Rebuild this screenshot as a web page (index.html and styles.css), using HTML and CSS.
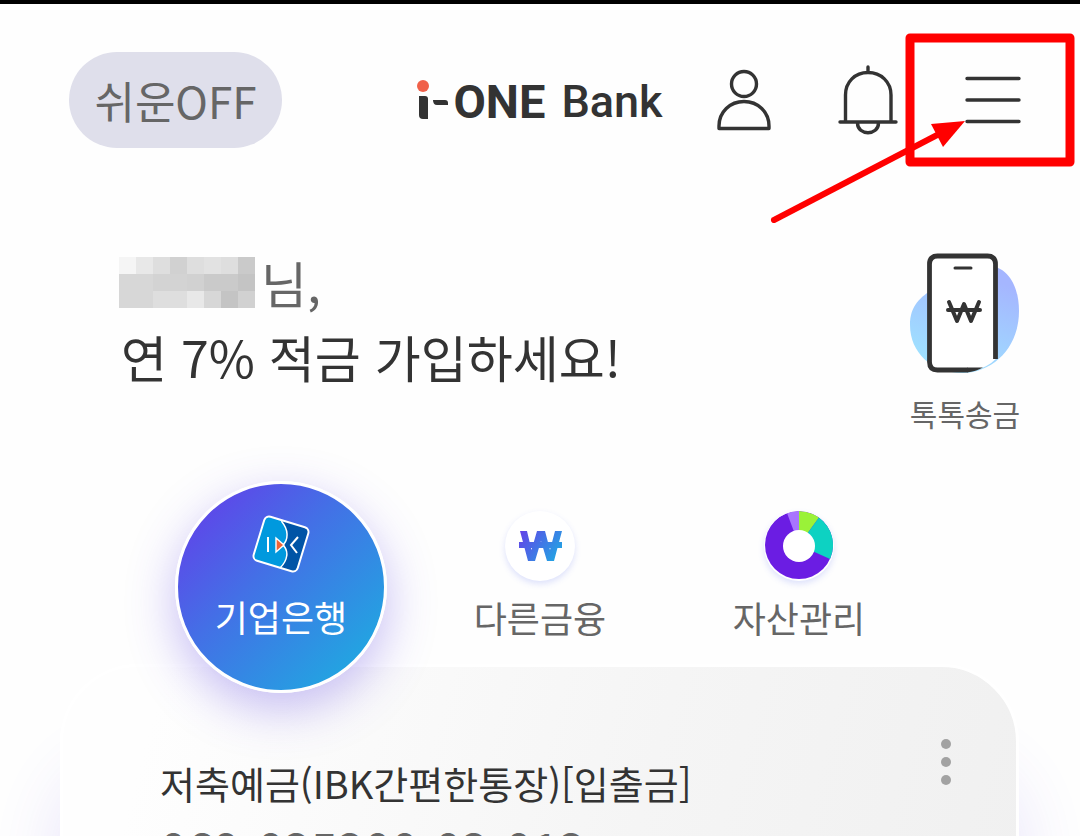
FILE: index.html
```html
<!DOCTYPE html>
<html lang="ko">
<head>
<meta charset="utf-8">
<meta name="viewport" content="width=device-width, initial-scale=1">
<title>i-ONE Bank</title>
<link rel="stylesheet" href="styles.css">
</head>
<body>
<div class="screen">
  <header class="topbar">
    <button class="easy" type="button">쉬운OFF</button>
    <a class="logo" href="#" aria-label="i-ONE Bank">
      <svg class="logo-i" viewBox="0 0 32 42" aria-hidden="true">
        <circle cx="7" cy="7" r="6" fill="#f0614a"/>
        <path d="M3 17h6q3 0 3 3v20H7q-4 0-4-4z" fill="#333"/>
        <path d="M17 21h12q3 0 3 3v2H21q-4 0-4-5z" fill="#333"/>
      </svg>
      <span class="logo-one">ONE</span>
      <span class="logo-bank">Bank</span>
    </a>
    <nav class="actions">
      <button class="icon" type="button" aria-label="내 정보">
        <svg width="54" height="62" viewBox="0 0 54 62"><g fill="none" stroke="#333" stroke-width="3.4" stroke-linejoin="round"><circle cx="27" cy="15" r="12.5"/><path d="M2 59.500V57C2 43 13 32.500 27 32.500S52 43 52 57v2.500z"/></g></svg>
      </button>
      <button class="icon" type="button" aria-label="알림">
        <svg width="60" height="70" viewBox="0 0 60 70"><g fill="none" stroke="#333" stroke-width="3.400" stroke-linecap="round"><path d="M30 2v5M7.500 57V30C7.500 17 17 7.500 30 7.500S53 17 53 30v27M2 57h56M19.500 58c0 13 21 13 21 0"/></g></svg>
      </button>
      <button class="icon menu" type="button" aria-label="전체 메뉴">
        <svg width="56" height="48" viewBox="0 0 56 48"><path d="M2 2.500h52M2 24h52M2 45.500h52" stroke="#333" stroke-width="3.400" stroke-linecap="round"/></svg>
      </button>
    </nav>
    <svg class="marker" viewBox="0 0 308 194" aria-hidden="true">
      <rect x="141" y="9" width="160" height="124" fill="none" stroke="#f00" stroke-width="9" stroke-linejoin="round"/>
      <path d="M5 191 172 104" stroke="#f00" stroke-width="6" stroke-linecap="round"/>
      <path d="M196 92 162 95 174 118z" fill="#f00"/>
    </svg>
  </header>

  <section class="hero">
    <div class="greeting">
      <p class="name">
        <svg class="mosaic" width="136" height="51" viewBox="0 0 8 3" preserveAspectRatio="none" shape-rendering="crispEdges" aria-hidden="true">
          <path fill="#f5f5f5" d="M0 0h1v1H0z"/><path fill="#e8e8e8" d="M1 0h1v1H1zM4 2h1v1H4z"/><path fill="#dedede" d="M2 0h1v1H2zM4 0h1v1H4zM6 0h1v1H6zM2 2h2v1H2z"/><path fill="#d1d1d1" d="M3 0h1v1H3zM4 1h1v1H4zM7 2h1v1H7z"/><path fill="#e2e2e2" d="M5 0h1v1H5z"/><path fill="#cacaca" d="M7 0h1v1H7zM5 1h2v1H5z"/><path fill="#d7d7d7" d="M0 1h2v1H0zM0 2h2v1H0zM5 2h1v1H5z"/><path fill="#d3d3d3" d="M2 1h2v1H2z"/><path fill="#c4c4c4" d="M7 1h1v1H7zM6 2h1v1H6z"/>
        </svg>
        <span>님,</span>
      </p>
      <p class="offer">연 7% 적금 가입하세요!</p>
    </div>
    <a class="transfer" href="#">
      <svg width="112" height="124" viewBox="0 0 112 124" aria-hidden="true">
        <defs><linearGradient id="blob" x1=".7" y1="0" x2=".3" y2="1"><stop offset=".1" stop-color="#a5b6ff"/><stop offset="1" stop-color="#9ee4ff"/></linearGradient></defs>
        <path d="M84 15C103 20 110 40 110 60c0 36-25 61-56 62C22 122 1 101 1 74 1 54 12 46 24 38 42 26 62 8 84 15z" fill="url(#blob)"/>
        <path d="M28 3h52q8 0 8 8v96Q78 117 64 120H28q-8 0-8-8V11q0-8 8-8z" fill="#fff"/>
        <path d="M86.500 108V13q0-8-8-8h-50q-8 0-8 8v98q0 8 8 8h30" fill="none" stroke="#333" stroke-width="4.800"/>
        <path d="M58 116.600h16q-7 4-16 4.800z" fill="#333"/>
        <path d="M46 17h16" stroke="#333" stroke-width="3" stroke-linecap="round"/>
        <path d="M40 51l8 19 7-17 7 17 8-19M39 59h32" fill="none" stroke="#333" stroke-width="4" stroke-linecap="round" stroke-linejoin="round"/>
      </svg>
      <span>톡톡송금</span>
    </a>
  </section>

  <nav class="tabs">
    <a class="tab active" href="#">
      <svg width="60" height="60" viewBox="0 0 60 60" aria-hidden="true">
        <defs><clipPath id="tile"><rect x="7" y="7" width="46" height="46" rx="5" transform="rotate(17 30 30)"/></clipPath></defs>
        <g clip-path="url(#tile)">
          <path fill="#0054a6" d="M0 0h60v60H0z"/>
          <path d="M-4-4H28L31 8C37 15 38 25 32 31 38 37 37 46 29 54L26 64H-4z" fill="#0099de" stroke="#fff" stroke-width="1.500"/>
        </g>
        <rect x="7" y="7" width="46" height="46" rx="5" transform="rotate(17 30 30)" fill="none" stroke="#fff" stroke-width="2"/>
        <path d="M17 23v15M47 23l-7 8 6 8" fill="none" stroke="#fff" stroke-width="2"/>
        <path d="M25 24v14l8-7z" fill="#f26334" stroke="#fff" stroke-width="1.400"/>
      </svg>
      <span>기업은행</span>
    </a>
    <a class="tab" href="#">
      <svg class="disc" width="70" height="70" viewBox="0 0 70 70" aria-hidden="true">
        <defs><linearGradient id="won" gradientUnits="userSpaceOnUse" x1="14" y1="20" x2="56" y2="50"><stop stop-color="#6540e8"/><stop offset="1" stop-color="#1caee3"/></linearGradient></defs>
        <path d="M15 20h7l4.500 19L32 20h8l5 19 5-19h7l-8 30h-7L36 30l-6 20h-7zM14 31h43v6H14z" fill="url(#won)"/>
      </svg>
      <span>다른금융</span>
    </a>
    <a class="tab" href="#">
      <svg class="disc" width="70" height="70" viewBox="0 0 70 70" aria-hidden="true">
        <circle cx="35" cy="34" r="34" fill="#6b1de3"/>
        <path d="M35 34V0A34 34 0 0 0 23 2z" fill="#a874ff"/>
        <path d="M35 34V0A34 34 0 0 1 55 6.500z" fill="#9af238"/>
        <path d="M35 34 55 6.500A34 34 0 0 1 66 48z" fill="#0dd2c2"/>
        <circle cx="35" cy="35" r="16" fill="#fff"/>
      </svg>
      <span>자산관리</span>
    </a>
  </nav>

  <main class="card">
    <div class="account">
      <h2>저축예금(IBK간편한통장)[입출금]</h2>
      <p>069-025200-02-012</p>
    </div>
    <button class="more" type="button" aria-label="더보기"><i></i><i></i><i></i></button>
  </main>
</div>
</body>
</html>
```
FILE: styles.css
```css
* { box-sizing: border-box; }

body {
  margin: 0;
  background: #fefefe;
  color: #333;
  font-family: "Noto Sans CJK KR", sans-serif;
}

h2, p { margin: 0; font-weight: 400; }

button {
  padding: 0;
  border: 0;
  background: none;
  color: inherit;
  font: inherit;
}

a { color: inherit; text-decoration: none; }

svg { display: block; flex: none; }

.screen {
  height: 100vh;
  overflow: hidden;
  border-top: 4px solid #000;
}

.topbar {
  position: relative;
  display: flex;
  align-items: center;
  justify-content: space-between;
  height: 192px;
  padding: 0 59px 0 69px;
}

.easy {
  width: 213px;
  height: 96px;
  border-radius: 48px;
  background: #dfdfeb;
  color: #666;
  font-size: 44px;
  line-height: 92px;
}

.logo {
  display: flex;
  align-items: center;
  margin-left: 80px;
  line-height: 56px;
}

.logo-i { width: 32px; height: 42px; }

.logo-one {
  margin-left: 5px;
  padding-top: 4px;
  font: 700 47px/56px Roboto, sans-serif;
}

.logo-bank {
  margin-left: 16px;
  padding-top: 4px;
  font: 500 45px/56px Roboto, sans-serif;
}

.actions { display: flex; align-items: center; }

.icon + .icon { margin-left: 67px; }

.marker {
  position: absolute;
  top: 25px;
  right: 3px;
  width: 308px;
  height: 194px;
  pointer-events: none;
}

.hero {
  display: flex;
  justify-content: space-between;
  padding: 50px 59px 0 119px;
}

.name {
  display: flex;
  align-items: center;
  gap: 6px;
  color: #666;
  font-size: 50px;
  line-height: 72px;
}

.offer {
  padding-left: 2px;
  font-size: 50px;
  line-height: 76px;
}

.transfer {
  display: flex;
  flex-direction: column;
  align-items: center;
  gap: 16px;
  padding-top: 5px;
  color: #666;
  font-size: 30px;
  line-height: 44px;
}

.tabs {
  position: relative;
  z-index: 1;
  display: grid;
  grid-template-columns: repeat(3, 259px);
  justify-content: center;
  justify-items: center;
  align-items: start;
  margin-top: 46px;
  color: #666;
  font-size: 36px;
  line-height: 52px;
}

.tab {
  display: flex;
  flex-direction: column;
  align-items: center;
  gap: 10px;
  padding-top: 30px;
}

.active {
  gap: 16px;
  width: 212px;
  height: 212px;
  border: 3px solid #fff;
  border-radius: 50%;
  background: linear-gradient(135deg, #5f45e9 10%, #4370e6 42%, #20a8e1 90%);
  box-shadow: 0 16px 48px rgba(92, 64, 225, 0.34);
  color: #fff;
}

.disc {
  border-radius: 50%;
  background: #fff;
  box-shadow: 0 3px 6px rgba(90, 110, 240, 0.2);
}

.card {
  display: flex;
  justify-content: space-between;
  align-items: flex-start;
  margin: -29px 61px 0 60px;
  padding: 72px 65px 60px 97px;
  border: 3px solid #fff;
  border-radius: 78px;
  background: linear-gradient(105deg, #fefefe 10%, #f5f5f5 60%, #f0f0f0);
  box-shadow: 0 100px 70px rgba(92, 64, 225, 0.14);
}

.account h2 {
  padding-top: 16px;
  font-size: 38px;
  line-height: 56px;
}

.account p {
  padding-top: 4px;
  color: #666;
  font-size: 47px;
  font-weight: 500;
  line-height: 68px;
}

.more {
  display: flex;
  flex-direction: column;
  gap: 8px;
}

.more i {
  width: 10px;
  height: 10px;
  border-radius: 50%;
  background: #a2a2a2;
}
```
